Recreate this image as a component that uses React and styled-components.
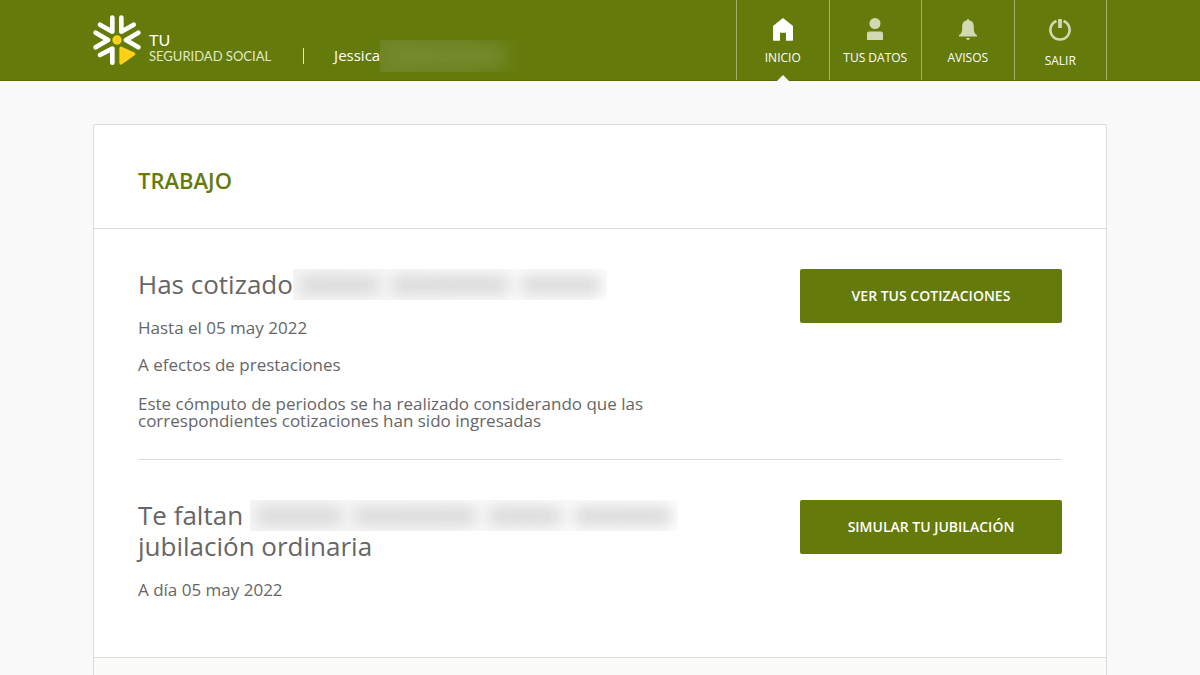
import React from "react";
import styled, { createGlobalStyle, ThemeProvider } from "styled-components";

const theme = {
  primaryColor: "#647a0b",
  primaryDark: "#596d0a",
  textColor: "#666666",
  lineColor: "#dcdcdc",
  background: "#f9f9f9",
  font: '"Open Sans", "Noto Sans", sans-serif',
};

const GlobalStyle = createGlobalStyle`
  *, *::before, *::after {
    box-sizing: border-box;
  }

  body {
    margin: 0;
    background: ${theme.background};
    color: ${theme.textColor};
    font-family: ${theme.font};
  }

  h1, h2, p {
    margin: 0;
  }
`;

const Page = styled.div`
  display: flex;
  flex-direction: column;
  min-height: 100vh;
`;

const Header = styled.header`
  background: ${(props) => props.theme.primaryColor};
  border-bottom: 1px solid ${(props) => props.theme.primaryDark};
`;

const Container = styled.div`
  width: calc(100% - 32px);
  max-width: 1014px;
  margin: 0 auto;
`;

const HeaderInner = styled(Container)`
  display: flex;
  justify-content: space-between;
  height: 80px;
`;

const Identity = styled.div`
  display: flex;
  align-items: center;
`;

const Brand = styled.a`
  display: flex;
  align-items: flex-end;
  gap: 8px;
  color: #e3e9c8;
  font-family: Lato, sans-serif;
  text-decoration: none;

  strong {
    display: block;
    color: #fff;
    font-size: 16px;
    font-weight: 400;
    line-height: 17px;
  }

  span {
    display: block;
    font-size: 13px;
    line-height: 17px;
    white-space: nowrap;
  }
`;

const User = styled.div`
  display: flex;
  align-items: center;
  align-self: flex-end;
  height: 32px;
  margin: 0 0 8px 32px;
  color: #fff;
  font-size: 15px;
  line-height: 20px;

  &::before {
    content: "";
    width: 1px;
    height: 16px;
    margin-right: 30px;
    background: #e3e9c8;
  }
`;

const UserName = styled.span`
  padding-bottom: 3px;
`;

const Nav = styled.nav`
  display: grid;
  grid-template-columns: repeat(4, 1fr);
  width: 371px;
  border-right: 1px solid #a2af6d;
`;

const NavLink = styled.a`
  position: relative;
  display: flex;
  flex-direction: column;
  align-items: center;
  gap: ${(props) => (props.$tall ? "12px" : "9px")};
  padding-top: 17px;
  border-left: 1px solid #a2af6d;
  color: #fff;
  font-size: 12px;
  font-weight: 500;
  line-height: 16px;
  text-decoration: none;
  white-space: nowrap;

  svg {
    color: ${(props) => (props.$active ? "#fff" : "#d1d8b2")};
  }

  &::after {
    content: "";
    display: ${(props) => (props.$active ? "block" : "none")};
    position: absolute;
    bottom: -1px;
    left: calc(50% - 6px);
    border: 6px solid transparent;
    border-top-width: 0;
    border-bottom-color: #f9f9f9;
  }
`;

const Card = styled(Container)`
  display: flex;
  flex: 1;
  flex-direction: column;
  margin-top: 43px;
  border: 1px solid ${(props) => props.theme.lineColor};
  border-bottom: 0;
  border-radius: 2px 2px 0 0;
  background: #fff;
`;

const CardHeader = styled.div`
  padding: 39px 44px 32px;
  border-bottom: 1px solid ${(props) => props.theme.lineColor};
`;

const Title = styled.h1`
  color: ${(props) => props.theme.primaryColor};
  font-size: 22px;
  font-weight: 600;
  line-height: 32px;
`;

const CardBody = styled.div`
  padding: 0 44px;
`;

const Row = styled.section`
  display: grid;
  grid-template-columns: 1fr 262px;
  gap: 96px;
  align-items: start;
  padding: 40px 0 ${(props) => (props.$last ? "59px" : "30px")};
  border-bottom: ${(props) => (props.$last ? "0" : `1px solid ${props.theme.lineColor}`)};
`;

const Heading = styled.h2`
  font-size: 26px;
  font-weight: 400;
  line-height: 31px;
`;

const Text = styled.p`
  margin-top: 19px;
  font-size: 17px;
  line-height: 17px;

  & + & {
    margin-top: 20px;
  }

  & + & + & {
    margin-top: 22px;
  }
`;

const Button = styled.button`
  height: 54px;
  padding: 0 8px 2px;
  border: 0;
  border-radius: 2px;
  background: ${(props) => props.theme.primaryColor};
  color: #fff;
  font-family: inherit;
  font-size: 14px;
  font-weight: 600;
  cursor: pointer;
`;

const CardFooter = styled.div`
  flex: 1;
  border-top: 1px solid ${(props) => props.theme.lineColor};
  background: #fbfcf7;
`;

const Redacted = styled.span`
  display: inline-flex;
  align-items: center;
  gap: 12px;
  height: ${(props) => (props.$onDark ? "32px" : "31px")};
  padding: 0 ${(props) => (props.$onDark ? "24px" : "6px")} 0 6px;
  overflow: hidden;
  background: ${(props) =>
    props.$onDark
      ? "linear-gradient(90deg, #6f8424, #6c811c 60%, #647a0b)"
      : "linear-gradient(90deg, #f8f8f8, #fcfcfc 60%, #fff)"};
  vertical-align: top;
`;

const HiddenWord = styled.i`
  flex: none;
  height: ${(props) => (props.$onDark ? "18px" : "20px")};
  background: ${(props) => (props.$onDark ? "#768b32" : "#d9d9d9")};
  filter: blur(8px);
`;

const Hidden = ({ words, onDark }) => (
  <Redacted $onDark={onDark} aria-hidden="true">
    {words.map((width, i) => (
      <HiddenWord key={i} $onDark={onDark} style={{ width }} />
    ))}
  </Redacted>
);

const Logo = () => (
  <svg width="48" height="50" viewBox="38 43 144 150" fill="none" aria-hidden="true">
    <g stroke="#fff" strokeWidth="14" strokeLinecap="round" strokeLinejoin="round">
      <path d="M96 51v42L59 72" />
      <path d="M123 51v42l37-21" />
      <path d="M46 96l37 22-37 22" />
      <path d="M174 96l-37 22 37 22" />
      <path d="M59 163l37-19v42" />
    </g>
    <circle cx="110" cy="118" r="14" fill="#fcd116" />
    <path
      d="M122 143v44l38-27z"
      fill="#fcd116"
      stroke="#fcd116"
      strokeWidth="10"
      strokeLinejoin="round"
    />
  </svg>
);

const HomeIcon = () => (
  <svg width="24" height="24" viewBox="0 0 24 24" fill="currentColor" aria-hidden="true">
    <path d="M12 1L22 9v14q0 .7-.7.7H15v-8H9v8H2.700q-.7 0-.7-.7V9z" />
  </svg>
);

const UserIcon = () => (
  <svg width="24" height="24" viewBox="0 0 24 24" fill="currentColor" aria-hidden="true">
    <circle cx="12" cy="6.500" r="5.500" />
    <path d="M4 23v-6.500Q4 14.500 6 14.500h12q2 0 2 2V23z" />
  </svg>
);

const BellIcon = () => (
  <svg width="24" height="24" viewBox="0 0 24 24" fill="currentColor" aria-hidden="true">
    <path d="M12 2q1.300 0 1.300 1.600C17 4.300 17.800 7 17.800 10c0 5 .7 6.500 3.200 8.200V19.500H3v-1.300C5.500 16.500 6.200 15 6.200 10c0-3 .8-5.700 4.500-6.400Q10.700 2 12 2z" />
    <path d="M10 21h4q-.5 2-2 2t-2-2z" />
  </svg>
);

const PowerIcon = () => (
  <svg width="24" height="24" viewBox="0 0 24 24" fill="none" stroke="currentColor" aria-hidden="true">
    <path d="M8.500 4a9.600 9.600 0 1 0 7 0" strokeWidth="2.600" />
    <path d="M12 2v9" strokeWidth="3.800" />
  </svg>
);

const App = () => (
  <ThemeProvider theme={theme}>
    <GlobalStyle />
    <Page>
      <Header>
        <HeaderInner>
          <Identity>
            <Brand href="#inicio">
              <Logo />
              <div>
                <strong>TU</strong>
                <span>SEGURIDAD SOCIAL</span>
              </div>
            </Brand>
            <User>
              <UserName>Jessica</UserName>
              <Hidden onDark words={[118]} />
            </User>
          </Identity>

          <Nav>
            <NavLink href="#inicio" $active>
              <HomeIcon />
              INICIO
            </NavLink>
            <NavLink href="#datos">
              <UserIcon />
              TUS DATOS
            </NavLink>
            <NavLink href="#avisos">
              <BellIcon />
              AVISOS
            </NavLink>
            <NavLink href="#salir" $tall>
              <PowerIcon />
              SALIR
            </NavLink>
          </Nav>
        </HeaderInner>
      </Header>

      <Card as="main">
        <CardHeader>
          <Title>TRABAJO</Title>
        </CardHeader>

        <CardBody>
          <Row>
            <div>
              <Heading>
                Has cotizado
                <Hidden words={[80, 118, 80]} />
              </Heading>
              <Text>Hasta el 05 may 2022</Text>
              <Text>A efectos de prestaciones</Text>
              <Text>
                Este cómputo de periodos se ha realizado considerando que las
                correspondientes cotizaciones han sido ingresadas
              </Text>
            </div>
            <Button type="button">VER TUS COTIZACIONES</Button>
          </Row>

          <Row $last>
            <div>
              <Heading>
                Te faltan <Hidden words={[86, 122, 74, 98]} /> jubilación ordinaria
              </Heading>
              <Text>A día 05 may 2022</Text>
            </div>
            <Button type="button">SIMULAR TU JUBILACIÓN</Button>
          </Row>
        </CardBody>

        <CardFooter />
      </Card>
    </Page>
  </ThemeProvider>
);

export default App;
